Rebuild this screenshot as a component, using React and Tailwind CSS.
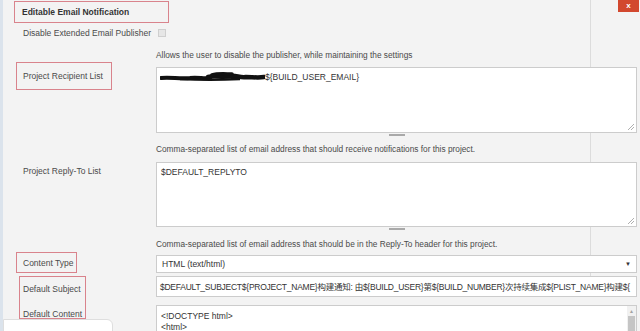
export default function App() {
  const handle = (
    <div className="h-[4px] flex items-center justify-center">
      <div className="w-[16px] h-[2px] bg-[#a9a9a9]" />
    </div>
  );
  const grip = (
    <svg className="absolute right-[1px] bottom-[1px]" width="8" height="8" viewBox="0 0 8 8">
      <path d="M7 1 L1 7 M7 4 L4 7" stroke="#9a9a9a" strokeWidth="0.8" fill="none" />
    </svg>
  );
  return (
    <div className="relative w-[640px] h-[331px] overflow-hidden bg-[#f3f3f3] border-l-[3px] border-[#dbe3ec] font-['Liberation_Sans','Noto_Sans_CJK_SC',sans-serif] text-[8.5px] leading-[10px] text-[#4a4a4a]">
      <div className="absolute left-[587px] top-0 h-[290px] w-px bg-[#dcdcdc]" />
      <div className="absolute right-[1px] top-0 w-[21px] h-[12px] bg-[#d2482e] text-white text-[8px] font-bold flex items-center justify-center">x</div>

      <div className="relative grid grid-cols-[153px_481px]">
        {/* header */}
        <div className="col-span-2 pt-[1px] pl-[11px]">
          <div className="w-[155px] h-[22px] border border-[#d9838c] flex items-center pl-[7px] font-bold text-[#333]">
            Editable Email Notification
          </div>
        </div>

        {/* disable row */}
        <div className="h-[21px] pl-[20px] pt-[5px]">Disable Extended Email Publisher</div>
        <div className="h-[21px] pt-[6px] pl-[2px]">
          <div className="w-[8px] h-[8px] border border-[#cfcfcf] bg-[#e6e6e6]" />
        </div>

        {/* allows desc */}
        <div className="h-[20px]" />
        <div className="h-[20px] pt-[6px] text-[8.3px]">Allows the user to disable the publisher, while maintaining the settings</div>

        {/* recipient */}
        <div className="h-[73px] pl-[13px]">
          <div className="-mt-[2px] w-[96px] h-[28px] border border-[#d9838c] flex items-center pl-[6px]">Project Recipient List</div>
        </div>
        <div className="h-[73px] pt-[3px]">
          <div className="relative h-[66px] bg-white border border-[#cccccc] px-[4px] pt-[4px] text-[#333] flex items-start">
            <svg width="105" height="10" viewBox="0 0 105 10" className="shrink-0 -ml-[1px]">
              <path d="M1 6 C10 5 20 7 30 6 C38 5 44 7 50 6" stroke="#111" strokeWidth="4" fill="none" strokeLinecap="round" />
              <path d="M48 5 C56 3 62 6 70 4 C76 3 80 6 86 5 C92 5 98 6 104 5" stroke="#111" strokeWidth="4.5" fill="none" strokeLinecap="round" />
              <path d="M52 3 C58 1 66 2 72 2" stroke="#111" strokeWidth="3.5" fill="none" strokeLinecap="round" />
              <path d="M20 7 C40 8 60 8 80 7" stroke="#111" strokeWidth="2.5" fill="none" />
            </svg>
            <span>{"${BUILD_USER_EMAIL}"}</span>
            {grip}
          </div>
          {handle}
        </div>

        {/* desc */}
        <div className="h-[24px]" />
        <div className="h-[24px] pt-[7px] text-[8.3px]">Comma-separated list of email address that should receive notifications for this project.</div>

        {/* reply-to */}
        <div className="h-[70px] pl-[20px] pt-[5px]">Project Reply-To List</div>
        <div className="h-[70px] pt-[1px]">
          <div className="relative h-[65px] bg-white border border-[#cccccc] px-[4px] pt-[4px] text-[#333]">
            $DEFAULT_REPLYTO
            {grip}
          </div>
          {handle}
        </div>

        {/* desc */}
        <div className="h-[24px]" />
        <div className="h-[24px] pt-[8px] text-[8.3px]">Comma-separated list of email address that should be in the Reply-To header for this project.</div>

        {/* content type */}
        <div className="h-[21px] pl-[13px]">
          <div className="-mt-[3px] w-[61px] h-[21px] border border-[#d9838c] flex items-center pl-[6px]">Content Type</div>
        </div>
        <div className="h-[21px]">
          <div className="h-[18px] bg-white border border-[#cccccc] pl-[5px] pr-[5px] flex items-center justify-between text-[#333]">
            <span>HTML (text/html)</span>
            <span className="text-[6px]">▼</span>
          </div>
        </div>

        {/* subject / content */}
        <div className="pl-[16px]">
          <div className="w-[67px] h-[43px] border border-[#d9838c] pl-[3px] pt-[7px]">
            <div>Default Subject</div>
            <div className="mt-[15px]">Default Content</div>
          </div>
        </div>
        <div>
          <div className="h-[21px] bg-white border border-[#cccccc] pl-[3px] flex items-center text-[#333] whitespace-nowrap overflow-hidden tracking-[-0.25px]">
            {"$DEFAULT_SUBJECT${PROJECT_NAME}构建通知: 由${BUILD_USER}第${BUILD_NUMBER}次持续集成${PLIST_NAME}构建${"}
          </div>
          <div className="mt-[8px] h-[40px] bg-white border border-[#cccccc] flex text-[#333]">
            <div className="flex-1 pl-[4px] pt-[5px] leading-[11px]">
              <div>{"<!DOCTYPE html>"}</div>
              <div>{"<html>"}</div>
            </div>
            <div className="w-[9px] bg-[#f1f1f1] flex flex-col items-center">
              <div className="h-[10px] flex items-center text-[5px] text-[#a3a3a3]">▲</div>
              <div className="w-[7px] flex-1 bg-[#c5c5c5]" />
            </div>
          </div>
        </div>
      </div>

      <div className="absolute left-0 top-[319px] w-[110px] h-[20px] bg-white border border-[#dedede] rounded-tr-[6px]" />
    </div>
  );
}
